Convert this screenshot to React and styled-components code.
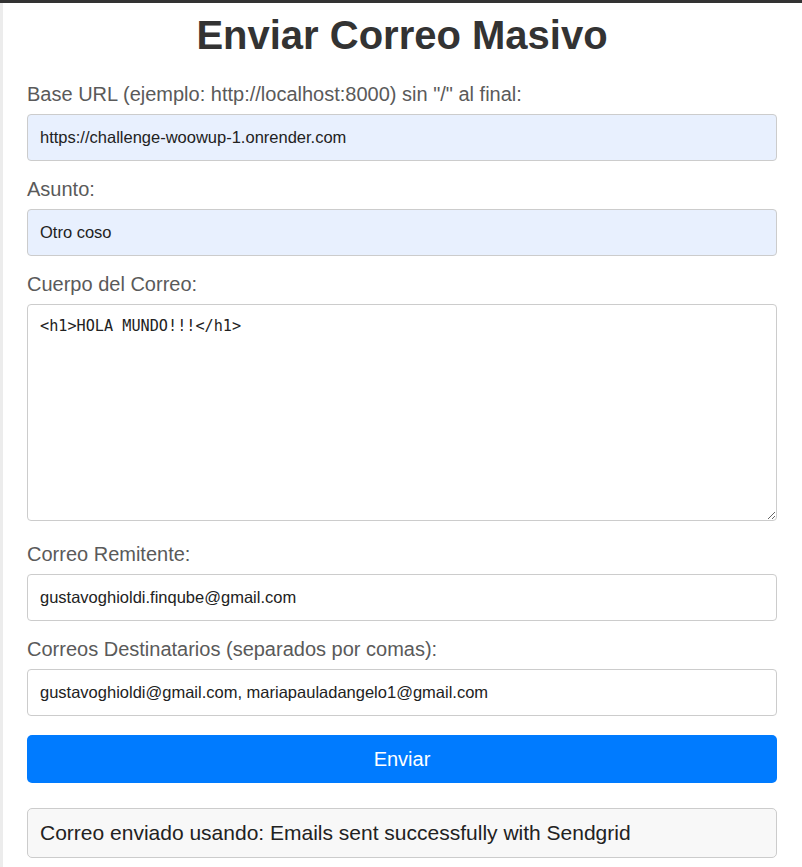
import React, { useState } from "react";
import styled, { createGlobalStyle } from "styled-components";

const GlobalStyle = createGlobalStyle`
  html, body {
    margin: 0;
    padding: 0;
    background-color: #ececec;
    font-family: "Liberation Sans", Arial, sans-serif;
  }
  * {
    box-sizing: border-box;
  }
`;

const Page = styled.div`
  min-height: 100vh;
  border-top: 3px solid #333;
  padding-left: 3px;
  background-color: #ececec;
`;

const Container = styled.div`
  min-height: calc(100vh - 3px);
  background-color: #fff;
  padding: 9px 25px 0 24px;
`;

const Title = styled.h1`
  margin: 0 0 25px;
  font-size: 40px;
  line-height: 46px;
  font-weight: bold;
  color: #333;
  text-align: center;
`;

// each field: label on top, control below
const Group = styled.div`
  margin-bottom: ${(p) => p.$space || 17}px;
`;

const Label = styled.label`
  display: block;
  font-size: 20px;
  line-height: 23px;
  color: #5a5a5a;
  margin-bottom: 8px;
`;

const Input = styled.input`
  display: block;
  width: 100%;
  height: 47px;
  padding: 0 12px;
  font-family: "Liberation Sans", Arial, sans-serif;
  font-size: 16.5px;
  color: #222;
  background-color: ${(p) => (p.$autofill ? "#e8f0fe" : "#fff")};
  border: 1px solid #ccc;
  border-radius: 4px;
  outline: none;
`;

const TextArea = styled.textarea`
  display: block;
  width: 100%;
  height: 217px;
  padding: 12px;
  font-family: "DejaVu Sans Mono", "Liberation Mono", monospace;
  font-size: 15.2px;
  line-height: 19px;
  color: #222;
  background-color: #fff;
  border: 1px solid #ccc;
  border-radius: 4px;
  outline: none;
`;

const SendButton = styled.button`
  display: block;
  width: 100%;
  height: 48px;
  margin-top: 19px;
  font-family: "Liberation Sans", Arial, sans-serif;
  font-size: 20px;
  color: #fff;
  background-color: #007bff;
  border: none;
  border-radius: 5px;
  cursor: pointer;
`;

const Result = styled.div`
  margin-top: 25px;
  padding: 12px;
  font-size: 21px;
  line-height: 24px;
  color: #222;
  background-color: #f8f8f8;
  border: 1px solid #ccc;
  border-radius: 5px;
`;

export default function App() {
  const [baseUrl, setBaseUrl] = useState("https://challenge-woowup-1.onrender.com");
  const [subject, setSubject] = useState("Otro coso");
  const [body, setBody] = useState("<h1>HOLA MUNDO!!!</h1>");
  const [from, setFrom] = useState("gustavoghioldi.finqube@gmail.com");
  const [to, setTo] = useState(
    "gustavoghioldi@gmail.com, mariapauladangelo1@gmail.com"
  );

  return (
    <>
      <GlobalStyle />
      <Page>
        <Container>
          <Title>Enviar Correo Masivo</Title>
          <Group>
            <Label>Base URL (ejemplo: http://localhost:8000) sin "/" al final:</Label>
            <Input $autofill value={baseUrl} onChange={(e) => setBaseUrl(e.target.value)} />
          </Group>
          <Group>
            <Label>Asunto:</Label>
            <Input $autofill value={subject} onChange={(e) => setSubject(e.target.value)} />
          </Group>
          <Group $space={22}>
            <Label>Cuerpo del Correo:</Label>
            <TextArea value={body} onChange={(e) => setBody(e.target.value)} />
          </Group>
          <Group>
            <Label>Correo Remitente:</Label>
            <Input value={from} onChange={(e) => setFrom(e.target.value)} />
          </Group>
          <Group>
            <Label>Correos Destinatarios (separados por comas):</Label>
            <Input value={to} onChange={(e) => setTo(e.target.value)} />
          </Group>
          <SendButton>Enviar</SendButton>
          <Result>Correo enviado usando: Emails sent successfully with Sendgrid</Result>
        </Container>
      </Page>
    </>
  );
}
